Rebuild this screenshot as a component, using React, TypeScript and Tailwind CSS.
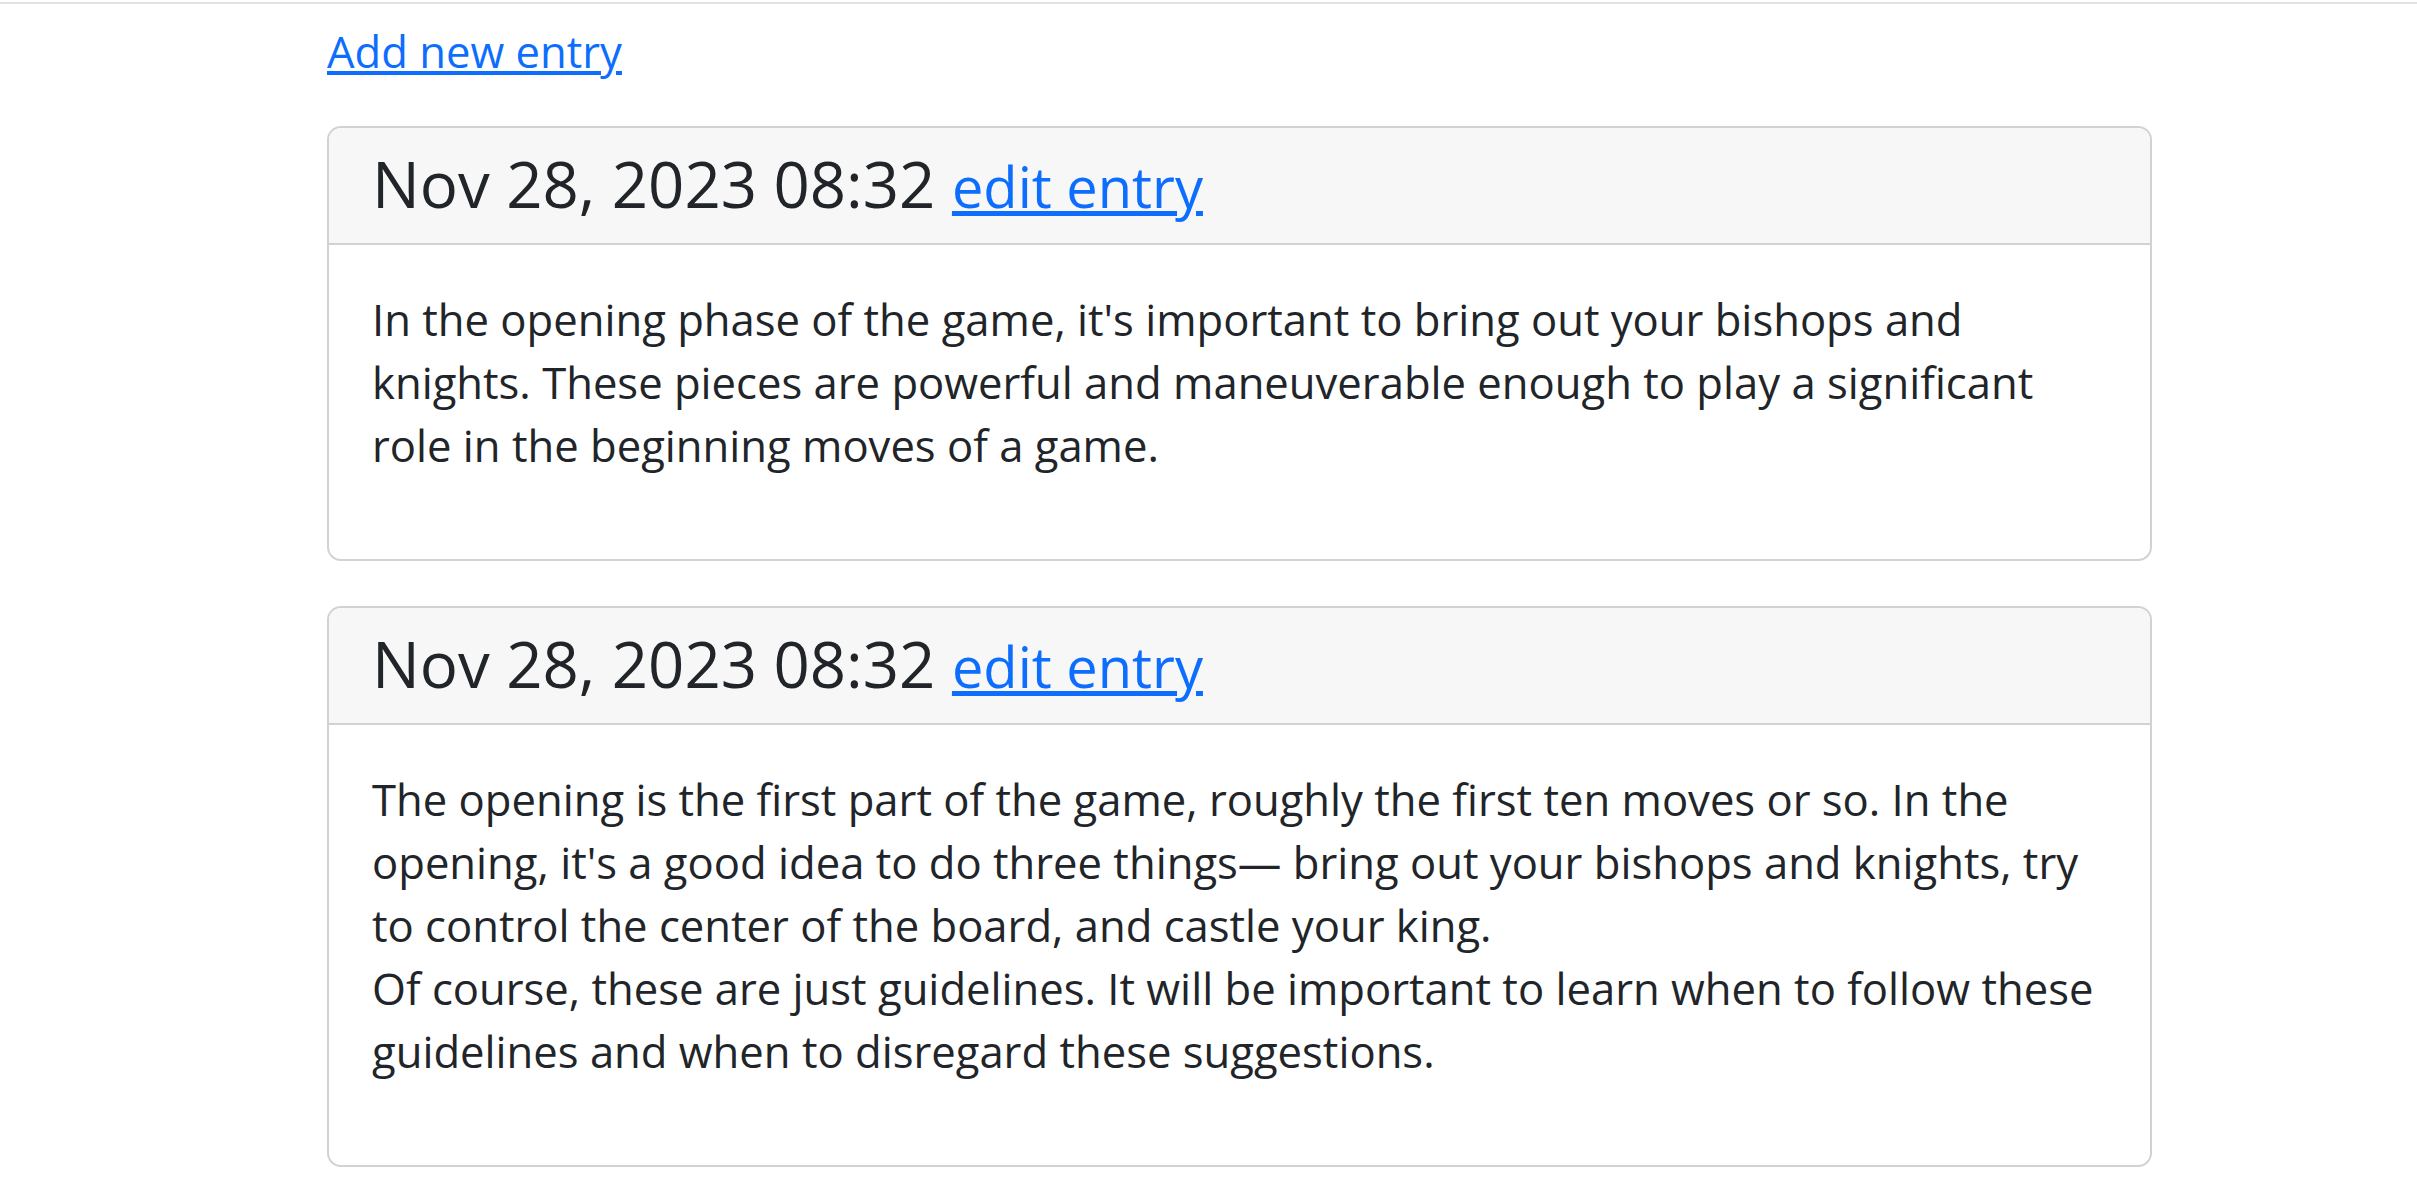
import React from 'react';

const entries = [
  {
    date: 'Nov 28, 2023 08:32',
    lines: [
      "In the opening phase of the game, it's important to bring out your bishops and knights. These pieces are powerful and maneuverable enough to play a significant role in the beginning moves of a game.",
    ],
  },
  {
    date: 'Nov 28, 2023 08:32',
    lines: [
      "The opening is the first part of the game, roughly the first ten moves or so. In the opening, it's a good idea to do three things\u2014 bring out your bishops and knights, try to control the center of the board, and castle your king.",
      'Of course, these are just guidelines. It will be important to learn when to follow these guidelines and when to disregard these suggestions.',
    ],
  },
];

const App: React.FC = () => {
  return (
    <main className="min-h-screen bg-white text-[#212529] font-['Open_Sans',sans-serif]">
      <div className="mt-[2px] h-[2px] bg-[#dee2e6]" />

      <div className="ml-[327px] w-[1825px] pt-[14px]">
        <a href="#" className="block w-fit text-[43.6px] leading-[66px] text-[#0d6efd] underline">
          Add new entry
        </a>

        <div className="mt-[42px] flex flex-col gap-[45px]">
          {entries.map((entry, i) => (
            <div key={i} className="rounded-[14px] border-2 border-[#d2d2d2] overflow-hidden">
              <div className="bg-[#f7f7f7] border-b-2 border-[#d2d2d2] px-[43px] pt-[17px] pb-[21px]">
                <h4 className="text-[63.5px] leading-[77px] font-normal">
                  {entry.date}{' '}
                  <a href="#" className="text-[56px] leading-none text-[#0d6efd] underline">edit entry</a>
                </h4>
              </div>
              <div className="px-[43px] pt-[43px] pb-[41px]">
                <p className="text-[43.6px] leading-[63px] mb-[41px]">
                  {entry.lines.map((line, j) => (
                    <React.Fragment key={j}>
                      {j > 0 && <br />}
                      {line}
                    </React.Fragment>
                  ))}
                </p>
              </div>
            </div>
          ))}
        </div>
      </div>
    </main>
  );
};

export default App;
